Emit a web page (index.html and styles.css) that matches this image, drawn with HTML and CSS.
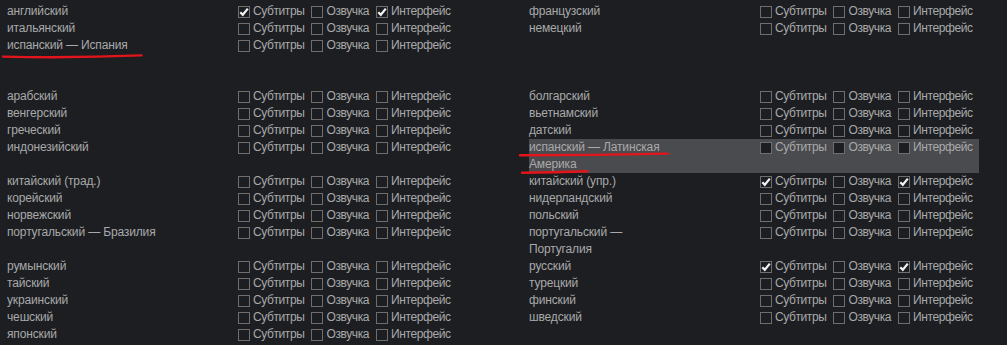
FILE: index.html
```html
<!DOCTYPE html>
<html lang="ru">

<head>
  <meta charset="UTF-8">
  <meta name="viewport" content="width=device-width, initial-scale=1.0">
  <title>Языки</title>
  <link rel="stylesheet" href="styles.css">
</head>

<body>
  <div class="languages">

    <div class="lang-section">
      <div class="lang-col">
        <div class="lang-row">
          <span class="lang-name">английский</span>
          <span class="options">
            <label class="opt"><span class="box checked"><svg viewBox="0 0 12 12"><path d="M2.3 6.2 L4.8 8.8 L9.8 2.6" /></svg></span>Субтитры</label>
            <label class="opt"><span class="box"></span>Озвучка</label>
            <label class="opt"><span class="box checked"><svg viewBox="0 0 12 12"><path d="M2.3 6.2 L4.8 8.8 L9.8 2.6" /></svg></span>Интерфейс</label>
          </span>
        </div>
        <div class="lang-row">
          <span class="lang-name">итальянский</span>
          <span class="options">
            <label class="opt"><span class="box"></span>Субтитры</label>
            <label class="opt"><span class="box"></span>Озвучка</label>
            <label class="opt"><span class="box"></span>Интерфейс</label>
          </span>
        </div>
        <div class="lang-row">
          <span class="lang-name">испанский — Испания</span>
          <span class="options">
            <label class="opt"><span class="box"></span>Субтитры</label>
            <label class="opt"><span class="box"></span>Озвучка</label>
            <label class="opt"><span class="box"></span>Интерфейс</label>
          </span>
        </div>
      </div>
      <div class="lang-col">
        <div class="lang-row">
          <span class="lang-name">французский</span>
          <span class="options">
            <label class="opt"><span class="box"></span>Субтитры</label>
            <label class="opt"><span class="box"></span>Озвучка</label>
            <label class="opt"><span class="box"></span>Интерфейс</label>
          </span>
        </div>
        <div class="lang-row">
          <span class="lang-name">немецкий</span>
          <span class="options">
            <label class="opt"><span class="box"></span>Субтитры</label>
            <label class="opt"><span class="box"></span>Озвучка</label>
            <label class="opt"><span class="box"></span>Интерфейс</label>
          </span>
        </div>
      </div>
    </div>

    <div class="lang-section">
      <div class="lang-col">
        <div class="lang-row">
          <span class="lang-name">арабский</span>
          <span class="options">
            <label class="opt"><span class="box"></span>Субтитры</label>
            <label class="opt"><span class="box"></span>Озвучка</label>
            <label class="opt"><span class="box"></span>Интерфейс</label>
          </span>
        </div>
        <div class="lang-row">
          <span class="lang-name">венгерский</span>
          <span class="options">
            <label class="opt"><span class="box"></span>Субтитры</label>
            <label class="opt"><span class="box"></span>Озвучка</label>
            <label class="opt"><span class="box"></span>Интерфейс</label>
          </span>
        </div>
        <div class="lang-row">
          <span class="lang-name">греческий</span>
          <span class="options">
            <label class="opt"><span class="box"></span>Субтитры</label>
            <label class="opt"><span class="box"></span>Озвучка</label>
            <label class="opt"><span class="box"></span>Интерфейс</label>
          </span>
        </div>
        <div class="lang-row">
          <span class="lang-name">индонезийский</span>
          <span class="options">
            <label class="opt"><span class="box"></span>Субтитры</label>
            <label class="opt"><span class="box"></span>Озвучка</label>
            <label class="opt"><span class="box"></span>Интерфейс</label>
          </span>
        </div>
      </div>
      <div class="lang-col">
        <div class="lang-row">
          <span class="lang-name">болгарский</span>
          <span class="options">
            <label class="opt"><span class="box"></span>Субтитры</label>
            <label class="opt"><span class="box"></span>Озвучка</label>
            <label class="opt"><span class="box"></span>Интерфейс</label>
          </span>
        </div>
        <div class="lang-row">
          <span class="lang-name">вьетнамский</span>
          <span class="options">
            <label class="opt"><span class="box"></span>Субтитры</label>
            <label class="opt"><span class="box"></span>Озвучка</label>
            <label class="opt"><span class="box"></span>Интерфейс</label>
          </span>
        </div>
        <div class="lang-row">
          <span class="lang-name">датский</span>
          <span class="options">
            <label class="opt"><span class="box"></span>Субтитры</label>
            <label class="opt"><span class="box"></span>Озвучка</label>
            <label class="opt"><span class="box"></span>Интерфейс</label>
          </span>
        </div>
        <div class="lang-row hover">
          <span class="lang-name">испанский — Латинская Америка</span>
          <span class="options">
            <label class="opt"><span class="box"></span>Субтитры</label>
            <label class="opt"><span class="box"></span>Озвучка</label>
            <label class="opt"><span class="box"></span>Интерфейс</label>
          </span>
        </div>
      </div>
    </div>

    <div class="lang-section">
      <div class="lang-col">
        <div class="lang-row">
          <span class="lang-name">китайский (трад.)</span>
          <span class="options">
            <label class="opt"><span class="box"></span>Субтитры</label>
            <label class="opt"><span class="box"></span>Озвучка</label>
            <label class="opt"><span class="box"></span>Интерфейс</label>
          </span>
        </div>
        <div class="lang-row">
          <span class="lang-name">корейский</span>
          <span class="options">
            <label class="opt"><span class="box"></span>Субтитры</label>
            <label class="opt"><span class="box"></span>Озвучка</label>
            <label class="opt"><span class="box"></span>Интерфейс</label>
          </span>
        </div>
        <div class="lang-row">
          <span class="lang-name">норвежский</span>
          <span class="options">
            <label class="opt"><span class="box"></span>Субтитры</label>
            <label class="opt"><span class="box"></span>Озвучка</label>
            <label class="opt"><span class="box"></span>Интерфейс</label>
          </span>
        </div>
        <div class="lang-row">
          <span class="lang-name">португальский — Бразилия</span>
          <span class="options">
            <label class="opt"><span class="box"></span>Субтитры</label>
            <label class="opt"><span class="box"></span>Озвучка</label>
            <label class="opt"><span class="box"></span>Интерфейс</label>
          </span>
        </div>
      </div>
      <div class="lang-col">
        <div class="lang-row">
          <span class="lang-name">китайский (упр.)</span>
          <span class="options">
            <label class="opt"><span class="box checked"><svg viewBox="0 0 12 12"><path d="M2.3 6.2 L4.8 8.8 L9.8 2.6" /></svg></span>Субтитры</label>
            <label class="opt"><span class="box"></span>Озвучка</label>
            <label class="opt"><span class="box checked"><svg viewBox="0 0 12 12"><path d="M2.3 6.2 L4.8 8.8 L9.8 2.6" /></svg></span>Интерфейс</label>
          </span>
        </div>
        <div class="lang-row">
          <span class="lang-name">нидерландский</span>
          <span class="options">
            <label class="opt"><span class="box"></span>Субтитры</label>
            <label class="opt"><span class="box"></span>Озвучка</label>
            <label class="opt"><span class="box"></span>Интерфейс</label>
          </span>
        </div>
        <div class="lang-row">
          <span class="lang-name">польский</span>
          <span class="options">
            <label class="opt"><span class="box"></span>Субтитры</label>
            <label class="opt"><span class="box"></span>Озвучка</label>
            <label class="opt"><span class="box"></span>Интерфейс</label>
          </span>
        </div>
        <div class="lang-row">
          <span class="lang-name">португальский — Португалия</span>
          <span class="options">
            <label class="opt"><span class="box"></span>Субтитры</label>
            <label class="opt"><span class="box"></span>Озвучка</label>
            <label class="opt"><span class="box"></span>Интерфейс</label>
          </span>
        </div>
      </div>
    </div>

    <div class="lang-section">
      <div class="lang-col">
        <div class="lang-row">
          <span class="lang-name">румынский</span>
          <span class="options">
            <label class="opt"><span class="box"></span>Субтитры</label>
            <label class="opt"><span class="box"></span>Озвучка</label>
            <label class="opt"><span class="box"></span>Интерфейс</label>
          </span>
        </div>
        <div class="lang-row">
          <span class="lang-name">тайский</span>
          <span class="options">
            <label class="opt"><span class="box"></span>Субтитры</label>
            <label class="opt"><span class="box"></span>Озвучка</label>
            <label class="opt"><span class="box"></span>Интерфейс</label>
          </span>
        </div>
        <div class="lang-row">
          <span class="lang-name">украинский</span>
          <span class="options">
            <label class="opt"><span class="box"></span>Субтитры</label>
            <label class="opt"><span class="box"></span>Озвучка</label>
            <label class="opt"><span class="box"></span>Интерфейс</label>
          </span>
        </div>
        <div class="lang-row">
          <span class="lang-name">чешский</span>
          <span class="options">
            <label class="opt"><span class="box"></span>Субтитры</label>
            <label class="opt"><span class="box"></span>Озвучка</label>
            <label class="opt"><span class="box"></span>Интерфейс</label>
          </span>
        </div>
        <div class="lang-row">
          <span class="lang-name">японский</span>
          <span class="options">
            <label class="opt"><span class="box"></span>Субтитры</label>
            <label class="opt"><span class="box"></span>Озвучка</label>
            <label class="opt"><span class="box"></span>Интерфейс</label>
          </span>
        </div>
      </div>
      <div class="lang-col">
        <div class="lang-row">
          <span class="lang-name">русский</span>
          <span class="options">
            <label class="opt"><span class="box checked"><svg viewBox="0 0 12 12"><path d="M2.3 6.2 L4.8 8.8 L9.8 2.6" /></svg></span>Субтитры</label>
            <label class="opt"><span class="box"></span>Озвучка</label>
            <label class="opt"><span class="box checked"><svg viewBox="0 0 12 12"><path d="M2.3 6.2 L4.8 8.8 L9.8 2.6" /></svg></span>Интерфейс</label>
          </span>
        </div>
        <div class="lang-row">
          <span class="lang-name">турецкий</span>
          <span class="options">
            <label class="opt"><span class="box"></span>Субтитры</label>
            <label class="opt"><span class="box"></span>Озвучка</label>
            <label class="opt"><span class="box"></span>Интерфейс</label>
          </span>
        </div>
        <div class="lang-row">
          <span class="lang-name">финский</span>
          <span class="options">
            <label class="opt"><span class="box"></span>Субтитры</label>
            <label class="opt"><span class="box"></span>Озвучка</label>
            <label class="opt"><span class="box"></span>Интерфейс</label>
          </span>
        </div>
        <div class="lang-row">
          <span class="lang-name">шведский</span>
          <span class="options">
            <label class="opt"><span class="box"></span>Субтитры</label>
            <label class="opt"><span class="box"></span>Озвучка</label>
            <label class="opt"><span class="box"></span>Интерфейс</label>
          </span>
        </div>
      </div>
    </div>

  </div>

  <!-- red marker strokes drawn over the screenshot -->
  <svg class="marks" viewBox="0 0 1007 345">
    <path d="M3 56.6 Q70 58.2 141.5 55.4" />
    <path d="M520 155.3 Q595 155.2 668 153.6" />
    <path d="M522 172.8 Q555 172.6 587.5 171.2" />
  </svg>
</body>

</html>
```

FILE: styles.css
```css
* {
  box-sizing: border-box;
  margin: 0;
  padding: 0;
}

body {
  background: #1c1e22;
  color: #a9a9a9;
  font-family: 'Liberation Sans', Arial, sans-serif;
  font-size: 12px;
  line-height: 17px;
  padding: 3px 0 0 7px;
  overflow: hidden;
  position: relative;
  height: 100vh;
}

.lang-section {
  display: flex;
  gap: 72px;
  min-height: 85px;
}

.lang-col {
  width: 450px;
}

.lang-row {
  display: flex;
  align-items: flex-start;
}

.lang-row.hover {
  background: #4a4b4f;
}

.lang-name {
  flex: 0 0 231px;
  padding-right: 75px;
  letter-spacing: -0.15px;
}

.options {
  display: flex;
  height: 17px;
  align-items: center;
  letter-spacing: -0.4px;
}

.opt {
  display: flex;
  align-items: center;
  margin-right: 7px;
}

.opt:last-child {
  margin-right: 0;
}

.box {
  width: 12px;
  height: 12px;
  border: 1px solid #6e6e6e;
  background: #1d1e21;
  margin-right: 3px;
  position: relative;
}

.box svg {
  position: absolute;
  left: -1px;
  top: -1px;
  width: 12px;
  height: 12px;
}

.box svg path {
  fill: none;
  stroke: #f2f2f2;
  stroke-width: 2.2;
}

.marks {
  position: absolute;
  left: 0;
  top: 0;
  width: 1007px;
  height: 345px;
  pointer-events: none;
}

.marks path {
  fill: none;
  stroke: #e4141b;
  stroke-width: 2.4;
  stroke-linecap: round;
}
```
